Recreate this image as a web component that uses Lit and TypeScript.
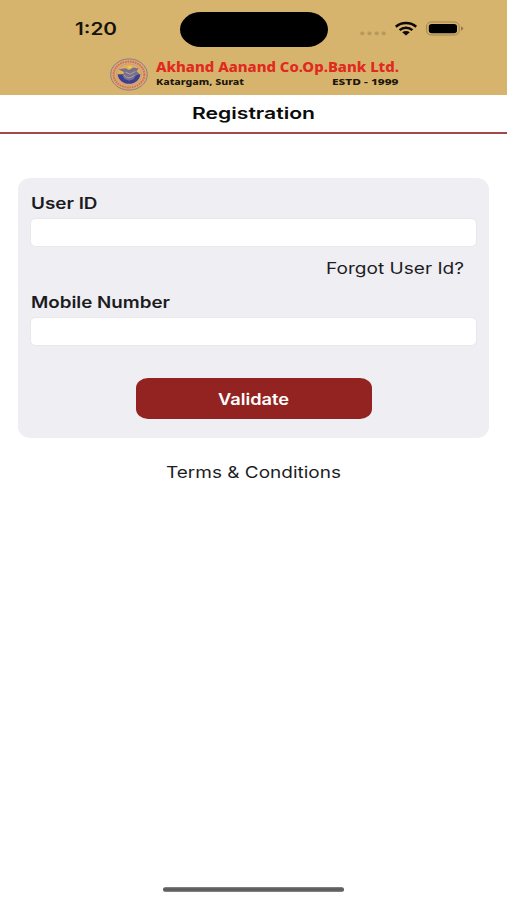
import { LitElement, html, css, svg } from "lit";
import { customElement, property } from "lit/decorators.js";

/** A single line of text set to an exact width, baseline at `base`. */
@customElement("fit-text")
class FitText extends LitElement {
  @property() text = "";
  @property({ type: Number }) width = 100;
  @property({ type: Number }) height = 20;
  @property({ type: Number }) base = 15;

  static styles = css`
    :host { display: block; flex: none; }
    svg { display: block; overflow: visible; }
    text { fill: currentColor; }
  `;

  render() {
    return html`<svg width=${this.width} height=${this.height}>
      ${svg`<text x="0" y=${this.base} textLength=${this.width} lengthAdjust="spacingAndGlyphs">${this.text}</text>`}
    </svg>`;
  }
}

@customElement("status-bar")
class StatusBar extends LitElement {
  static styles = css`
    :host { display: grid; grid-template-columns: 180px 148px 1fr; height: 47px; padding-top: 12px; box-sizing: border-box; }
    .time { padding: 7px 0 0 75px; font: 600 17px Inter, "Liberation Sans", sans-serif; color: #17130b; }
    .island { background: #000; border-radius: 21px / 17.5px; }
    svg { display: block; }
  `;

  render() {
    return html`
      <fit-text class="time" text="1:20" .width=${42} .height=${20} .base=${16.4}></fit-text>
      <div class="island"></div>
      <svg width="179" height="35" viewBox="328 12 179 35">
        <g fill="#b6995f">
          <rect x="360.2" y="31.6" width="4.2" height="3.6" rx="1.6" />
          <rect x="367.4" y="31.6" width="4.2" height="3.6" rx="1.6" />
          <rect x="374.6" y="31.6" width="4.2" height="3.6" rx="1.6" />
          <rect x="381.6" y="31.6" width="4.2" height="3.6" rx="1.6" />
        </g>
        <g fill="none" stroke="#0c0904" stroke-width="2.5">
          <path d="M395.8 26.7C401.5 21.7 410.5 21.7 416.2 26.7" />
          <path d="M399.6 30.1C403.2 26.9 408.8 26.9 412.4 30.1" />
        </g>
        <path d="M402.2 32.3C404.4 30.6 407.6 30.6 409.8 32.3L406 35.5Z" fill="#0c0904" />
        <rect x="426.6" y="22" width="32.6" height="13" rx="4.8" ry="4.2" fill="none" stroke="#9c8350" />
        <rect x="428.8" y="24" width="28.2" height="9.2" rx="3" ry="2.6" fill="#000" />
        <path d="M461 26.4Q463.2 27 463.2 28.6T461 30.8Z" fill="#95794a" />
      </svg>
    `;
  }
}

@customElement("bank-brand")
class BankBrand extends LitElement {
  static styles = css`
    :host { display: flex; height: 48px; padding: 11px 0 0 110px; box-sizing: border-box; font-family: "Noto Sans", "Open Sans", sans-serif; font-weight: 800; }
    .seal { display: block; flex: none; margin-right: 8px; }
    .name { color: #e02a20; font-size: 13.2px; }
    .row { display: flex; justify-content: space-between; width: 242.5px; color: #1d1609; font-size: 9.4px; }
  `;

  render() {
    return html`
      <svg class="seal" width="38" height="33" viewBox="0 0 38 33">
        <ellipse cx="19" cy="16.5" rx="18.3" ry="15.6" fill="#d8ab78" stroke="#8b7c86" stroke-width="1" />
        <ellipse cx="19" cy="16.5" rx="15.4" ry="13" fill="none" stroke="#d4704c" stroke-width="2" stroke-dasharray="1.7 .8" />
        <ellipse cx="19" cy="16.5" rx="12.6" ry="10.7" fill="#e3ae58" stroke="#b99a92" stroke-width=".8" />
        <path d="M7.6 16.2H30.4C29.8 22 25 25.8 19 25.8S8.2 22 7.6 16.2Z" fill="#3d3d91" />
        <path d="M8.5 11.2L15.5 10.2 19 12 23.5 9.6 28.5 10.6 26.5 13.2 29.2 15.4 25.6 18 23.4 21.2 19 22.8 14.6 21 12.4 17.6 14.2 14.2Z" fill="#77708c" />
        <path d="M14 17.2Q19 22.5 24.6 17M15.5 14.2L20 16.2 25.4 13.4" fill="none" stroke="#b3a29c" stroke-width="1" />
        <path d="M17 8.6L22 8.2 20.2 11Z" fill="#f2cf4a" />
      </svg>
      <div>
        <fit-text class="name" text="Akhand Aanand Co.Op.Bank Ltd." .width=${243} .height=${17} .base=${14}></fit-text>
        <div class="row">
          <fit-text text="Katargam, Surat" .width=${88} .height=${14} .base=${10}></fit-text>
          <fit-text text="ESTD - 1999" .width=${66.5} .height=${14} .base=${10}></fit-text>
        </div>
      </div>
    `;
  }
}

@customElement("app-root")
class AppRoot extends LitElement {
  static styles = css`
    :host { display: flex; flex-direction: column; width: 507px; height: 900px; background: #fff; overflow: hidden; font: 600 16px Inter, "Liberation Sans", sans-serif; color: #1c1c1f; }
    .top { background: #d7b46d; height: 95px; flex: none; }
    .title { display: flex; justify-content: center; height: 39px; box-sizing: border-box; border-bottom: 2px solid #a04a47; font-size: 16.5px; color: #0b0b0b; flex: none; }
    .card { display: flex; flex-direction: column; width: 471px; height: 260px; box-sizing: border-box; margin: 44.4px 0 0 18.3px; padding: 15px 12px 0; background: #eeeef3; border-radius: 13px / 11px; flex: none; }
    .label { padding-left: 0.7px; }
    .field { height: 29px; box-sizing: border-box; background: #fff; border: 1px solid #e8e8ec; border-radius: 6px / 5px; padding: 0 8px; outline: none; width: 100%; margin: 0; flex: none; }
    .forgot { align-self: flex-end; margin-right: 13.3px; font-weight: 400; }
    .validate { display: flex; justify-content: center; align-self: center; width: 236px; height: 41px; margin-top: 32px; padding: 0; border: 0; border-radius: 12px / 10px; background: #932320; color: #fff; font: inherit; }
    .validate fit-text { margin-right: 1px; }
    .terms { align-self: center; margin-top: 22px; font-weight: 400; }
    .home { align-self: center; width: 181px; height: 5px; margin: auto 0 8px; border-radius: 3px; background: linear-gradient(#8c8c8c, #5c5c5c 35%, #5c5c5c 65%, #8c8c8c); }
  `;

  render() {
    return html`
      <header class="top">
        <status-bar></status-bar>
        <bank-brand></bank-brand>
      </header>
      <div class="title">
        <fit-text text="Registration" .width=${123} .height=${36} .base=${23.5}></fit-text>
      </div>
      <main class="card">
        <fit-text class="label" text="User ID" .width=${66.5} .height=${24.2} .base=${16}></fit-text>
        <input class="field" aria-label="User ID" />
        <fit-text class="forgot" text="Forgot User Id?" .width=${138} .height=${46.2} .base=${27}></fit-text>
        <fit-text class="label" text="Mobile Number" .width=${139} .height=${24.2} .base=${15.4}></fit-text>
        <input class="field" aria-label="Mobile Number" />
        <button class="validate">
          <fit-text text="Validate" .width=${71} .height=${41} .base=${26.8}></fit-text>
        </button>
      </main>
      <fit-text class="terms" text="Terms &amp; Conditions" .width=${175} .height=${24} .base=${17.6}></fit-text>
      <div class="home"></div>
    `;
  }
}
